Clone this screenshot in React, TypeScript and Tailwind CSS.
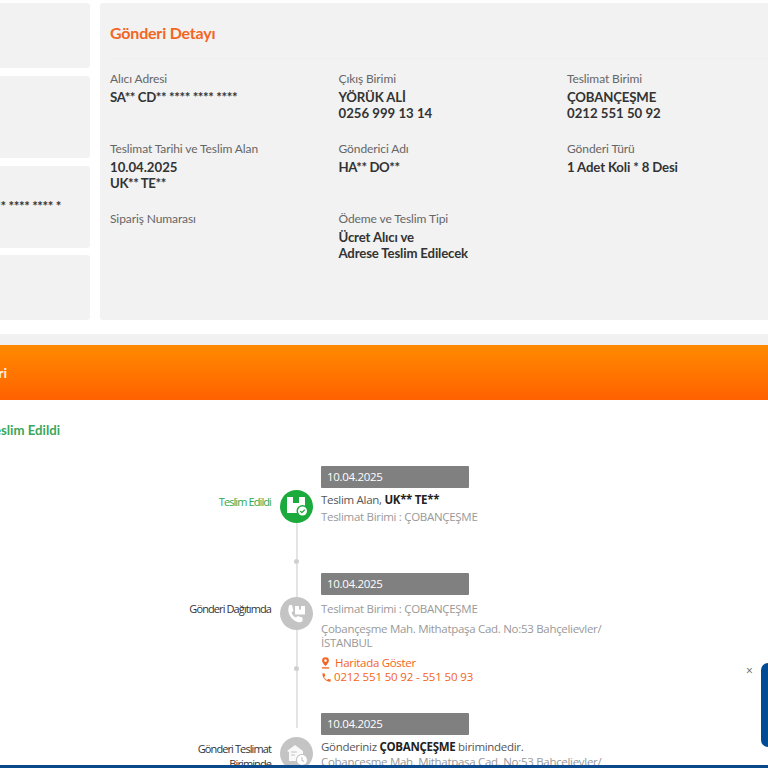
const sans = "font-['Open_Sans','Noto_Sans',sans-serif]"
const lato = "font-['Lato','Noto_Sans',sans-serif]"
const body = 'text-[11.5px] tracking-[-0.3px]'
const side = 'text-[11px] leading-[15px] tracking-[-0.9px]'

function LeftCard({ className, children }: { className: string; children?: React.ReactNode }) {
  return <div className={`bg-[#f2f2f2] rounded-r-[3px] ${className}`}>{children}</div>
}

// yildizli maskeli degerler daha sikisik duruyor
function valueTracking(line: string) {
  if (/^[\d.\s]+$/.test(line)) return 'tracking-normal'
  return line.includes('*') && !line.includes('Adet') ? 'tracking-[-0.4px]' : 'tracking-[-0.15px]'
}

function Info({ label, lines }: { label: string; lines: string[] }) {
  return (
    <div className="h-[70px]">
      <p className="text-[12px] leading-[16px] tracking-[-0.1px] text-[#666]">{label}</p>
      <div className="mt-[2px] text-[13.2px] leading-[16px] font-bold text-[#333]">
        {lines.map((l) => (
          <p key={l} className={valueTracking(l)}>
            {l}
          </p>
        ))}
      </div>
    </div>
  )
}

function DeliveredIcon() {
  return (
    <svg viewBox="0 0 33 33" className="w-[33px] h-[33px]">
      <circle cx="16.5" cy="16.5" r="16.5" fill="#1bab3c" />
      <path d="M7 7h6v6h6V7h6v16H7z" fill="#fff" />
      <circle cx="22.5" cy="21" r="6" fill="#1bab3c" />
      <circle cx="22.5" cy="21" r="4.500" fill="#fff" />
      <path d="M20.300 21l1.600 1.600 2.800-2.800" fill="none" stroke="#1bab3c" strokeWidth="1.300" />
    </svg>
  )
}

function DistributionIcon() {
  return (
    <svg viewBox="0 0 33 33" className="w-[33px] h-[33px]">
      <circle cx="16.5" cy="16.5" r="16.5" fill="#c4c4c4" />
      <path d="M9 8h3l1.500 6-2 1.500c.8 2.400 2.200 4 4.500 5l1.500-1.500 5 1.500v3.500c-1 1.500-3 1.500-5 1-4.500-1.500-8-5.500-9-10-.4-2.500 0-5 1-7z" fill="#fff" />
      <path d="M15 9h10v8.500H15z" fill="#fff" />
      <path d="M19 9h2v3.500h-2z" fill="#c4c4c4" />
    </svg>
  )
}

function BranchIcon() {
  return (
    <svg viewBox="0 0 33 33" className="w-[33px] h-[33px]">
      <circle cx="16.5" cy="16.5" r="16.5" fill="#c4c4c4" />
      <path d="M7 14l8-6 8 6v3h-2a6 6 0 0 0-5 7H9V15z" fill="#fff" opacity=".9" />
      <path d="M11 15h6M11 18h4" stroke="#c4c4c4" strokeWidth="1" />
      <circle cx="22" cy="23" r="5" fill="#fff" />
      <path d="M22 20v3.200l2 1.300" fill="none" stroke="#c4c4c4" strokeWidth="1.100" />
    </svg>
  )
}

function DateBar() {
  return (
    <div className={`w-[148px] h-[22px] bg-[#808080] rounded-[1px] pl-[6px] leading-[22px] text-white ${body}`}>
      10.04.2025
    </div>
  )
}

function Rail({ icon, topLine, gapped, tail }: { icon: React.ReactNode; topLine?: boolean; gapped?: boolean; tail?: boolean }) {
  return (
    <div className="ml-[9px] w-[33px] shrink-0 flex flex-col items-center">
      <div className="h-[24px] shrink-0">
        {topLine && <div className={`w-[2px] bg-[#e4e4e4] ${gapped ? 'h-[15px]' : 'h-[24px]'}`} />}
      </div>
      <div className="shrink-0 h-[33px]">{icon}</div>
      {tail && (
        <div className="flex-1 flex flex-col items-center">
          <div className="w-[2px] h-[36px] bg-[#e4e4e4]" />
          <div className="w-[5px] h-[5px] rounded-full bg-[#cfcfcf]" />
          <div className="w-[2px] flex-1 bg-[#e4e4e4]" />
        </div>
      )}
    </div>
  )
}

export default function App() {
  return (
    <div className={`relative w-[768px] h-[768px] overflow-hidden bg-white ${sans}`}>
      {/* ust kartlar */}
      <div className={`flex gap-[10px] pt-[3px] h-[320px] ${lato}`}>
        <div className="w-[90px] shrink-0 flex flex-col gap-[8px]">
          <LeftCard className="h-[65px]" />
          <LeftCard className="h-[82px]" />
          <LeftCard className="h-[82px] flex justify-end pr-[29px] overflow-hidden">
            <span className="mt-[32px] whitespace-nowrap text-[13.2px] leading-[16px] tracking-[-0.4px] font-bold text-[#333]">
              **** **** **** *
            </span>
          </LeftCard>
          <LeftCard className="h-[65px] -mt-px" />
        </div>
        <div className="flex-1 bg-[#f2f2f2] rounded-l-[3px] pl-[10px]">
          <div className="h-[56px] border-b border-[#eeeeee] flex items-center">
            <h2 className="text-[16px] leading-[20px] tracking-[-0.2px] font-bold text-[#f26522] mt-[5px]">Gönderi Detayı</h2>
          </div>
          <div className="grid grid-cols-[228.5px_228.5px_1fr] pt-[12px]">
            <Info label="Alıcı Adresi" lines={['SA** CD** **** **** ****']} />
            <Info label="Çıkış Birimi" lines={['YÖRÜK ALİ', '0256 999 13 14']} />
            <Info label="Teslimat Birimi" lines={['ÇOBANÇEŞME', '0212 551 50 92']} />
            <Info label="Teslimat Tarihi ve Teslim Alan" lines={['10.04.2025', 'UK** TE**']} />
            <Info label="Gönderici Adı" lines={['HA** DO**']} />
            <Info label="Gönderi Türü" lines={['1 Adet Koli * 8 Desi']} />
            <div className="h-[70px]">
              <p className="text-[12px] leading-[16px] tracking-[-0.1px] text-[#666]">Sipariş Numarası</p>
            </div>
            <Info label="Ödeme ve Teslim Tipi" lines={['Ücret Alıcı ve', 'Adrese Teslim Edilecek']} />
          </div>
        </div>
      </div>

      {/* turuncu baslik */}
      <div className="mt-[14px] h-[11px] bg-[#f1f1f1]" />
      <div className="h-[55px] bg-gradient-to-b from-[#ff8a00] to-[#ff6000] flex items-center">
        <div className="w-[7px] flex justify-end overflow-hidden">
          <span className={`whitespace-nowrap text-[14px] font-bold text-[#fff3e0] ${lato}`}>Gönderi Hareketleri</span>
        </div>
      </div>

      <div className="h-[66px] pt-[22px]">
        <div className="w-[60px] flex justify-end overflow-hidden">
          <span className={`whitespace-nowrap text-[13.2px] leading-[16px] font-bold text-[#3aa75c] ${lato}`}>Teslim Edildi</span>
        </div>
      </div>

      {/* zaman cizelgesi */}
      <div className="flex h-[107px]">
        <div className={`w-[271px] shrink-0 pt-[28px] text-right text-[#2ea84f] ${side}`}>
          Teslim Edildi
        </div>
        <Rail icon={<DeliveredIcon />} tail />
        <div className="ml-[8px] flex-1">
          <DateBar />
          <p className={`mt-[3px] leading-[17px] text-[#555] ${body}`}>
            Teslim Alan, <b className="font-bold text-[#222]">UK** TE**</b>
          </p>
          <p className={`leading-[17px] text-[#999] ${body}`}>Teslimat Birimi : ÇOBANÇEŞME</p>
        </div>
      </div>

      <div className="flex h-[140px]">
        <div className={`w-[271px] shrink-0 pt-[28px] text-right text-[#333] ${side}`}>
          Gönderi Dağıtımda
        </div>
        <Rail icon={<DistributionIcon />} topLine tail />
        <div className="ml-[8px] flex-1">
          <DateBar />
          <p className={`mt-[5px] leading-[17px] text-[#999] ${body}`}>Teslimat Birimi : ÇOBANÇEŞME</p>
          <p className={`mt-[5px] w-[300px] leading-[14px] text-[#999] ${body}`}>
            Çobançeşme Mah. Mithatpaşa Cad. No:53 Bahçelievler/ İSTANBUL
          </p>
          <div className={`mt-[6px] flex items-center leading-[14px] text-[#f26522] ${body}`}>
            <svg viewBox="0 0 10 13" className="w-[9px] h-[12px] mr-[5px]">
              <path d="M5 0a3.800 3.800 0 0 0-3.800 3.800C1.200 6.500 5 10 5 10s3.800-3.500 3.800-6.200A3.800 3.800 0 0 0 5 0zm0 5.300a1.500 1.500 0 1 1 0-3 1.500 1.500 0 0 1 0 3z" fill="#f26522" />
              <rect x="1" y="11.200" width="8" height="1.500" fill="#f26522" />
            </svg>
            Haritada Göster
          </div>
          <div className="flex items-center text-[11.5px] tracking-[-0.15px] leading-[14px] text-[#f26522]">
            <svg viewBox="0 0 24 24" className="w-[11px] h-[11px] mr-[2px]">
              <path d="M6.600 10.800c1.400 2.800 3.800 5.100 6.600 6.600l2.200-2.200c.3-.3.700-.4 1-.2 1.100.4 2.300.6 3.600.6.600 0 1 .4 1 1V20c0 .6-.4 1-1 1C10.600 21 3 13.400 3 4c0-.6.400-1 1-1h3.500c.6 0 1 .4 1 1 0 1.300.2 2.500.6 3.600.1.300 0 .7-.2 1z" fill="#f26522" />
            </svg>
            0212 551 50 92 - 551 50 93
          </div>
        </div>
      </div>

      <div className="flex">
        <div className={`w-[271px] shrink-0 pt-[28px] pl-[180px] text-right text-[#333] ${side}`}>
          Gönderi Teslimat Biriminde
        </div>
        <Rail icon={<BranchIcon />} topLine gapped />
        <div className="ml-[8px] flex-1">
          <DateBar />
          <p className={`mt-[3px] leading-[17px] text-[#555] ${body}`}>
            Gönderiniz <b className="font-bold text-[#222]">ÇOBANÇEŞME</b> birimindedir.
          </p>
          <p className={`w-[300px] leading-[14px] text-[#999] ${body}`}>
            Çobançeşme Mah. Mithatpaşa Cad. No:53 Bahçelievler/ İSTANBUL
          </p>
        </div>
      </div>

      {/* sabit alt bar ve yardim widget */}
      <span className="absolute left-[746px] top-[663px] text-[12px] leading-[16px] text-[#666]">×</span>
      <div className="absolute left-[761px] top-[663px] w-[7px] h-[84px] bg-[#004b93] rounded-l-[8px]" />
      <div className="absolute left-0 bottom-0 w-full h-[3px] bg-[#0a4a8c]" />
    </div>
  )
}
